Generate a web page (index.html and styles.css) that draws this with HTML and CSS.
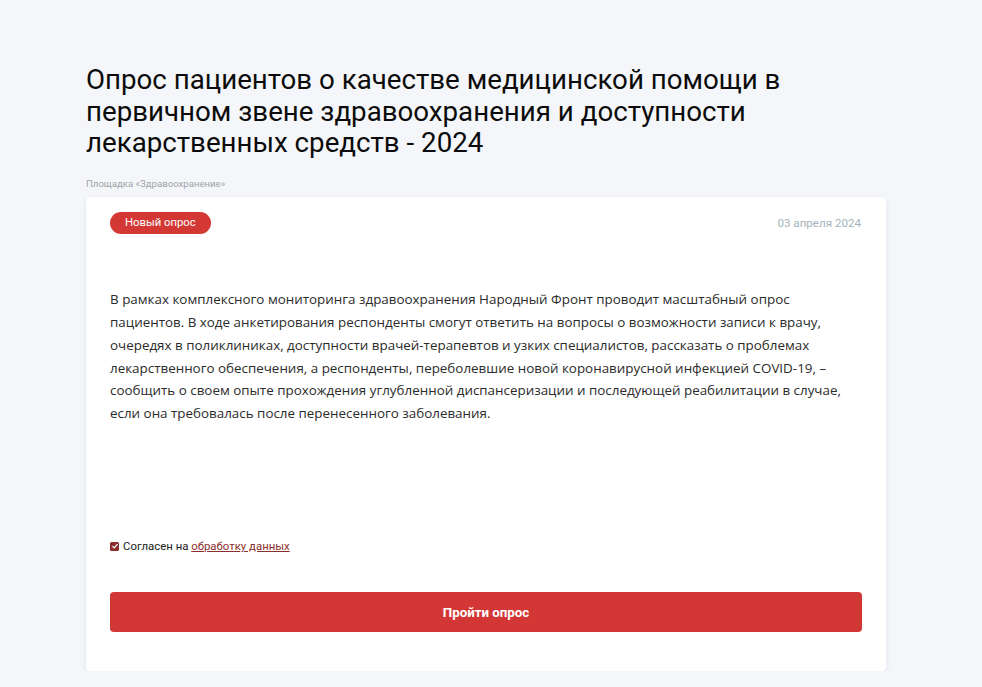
FILE: index.html
```html
<!DOCTYPE html>
<html lang="ru">
<head>
<meta charset="utf-8">
<link rel="stylesheet" href="styles.css">
</head>
<body>
<main class="page">
  <h1 class="title">Опрос пациентов о качестве медицинской помощи в первичном звене здравоохранения и доступности лекарственных средств - 2024</h1>
  <div class="platform">Площадка «Здравоохранение»</div>
  <section class="card">
    <div class="card-head">
      <span class="badge">Новый опрос</span>
      <span class="date">03 апреля 2024</span>
    </div>
    <p class="desc">В рамках комплексного мониторинга здравоохранения Народный Фронт проводит масштабный опрос пациентов. В ходе анкетирования респонденты смогут ответить на вопросы о возможности записи к врачу, очередях в поликлиниках, доступности врачей-терапевтов и узких специалистов, рассказать о проблемах лекарственного обеспечения, а респонденты, переболевшие новой коронавирусной инфекцией COVID-19, – сообщить о своем опыте прохождения углубленной диспансеризации и последующей реабилитации в случае, если она требовалась после перенесенного заболевания.</p>
    <label class="agree">
      <span class="check"><svg viewBox="0 0 10 10" width="8" height="8"><path d="M1.8 5.2 L4 7.3 L8.2 2.6" fill="none" stroke="#fff" stroke-width="1.6"/></svg></span>
      <span>Согласен на <a href="#" class="link">обработку данных</a></span>
    </label>
    <button class="btn">Пройти опрос</button>
  </section>
</main>
</body>
</html>
```
FILE: styles.css
```css
html, body {
  margin: 0;
  padding: 0;
  background: #f4f6f9;
}
body {
  font-family: "Open Sans", "Noto Sans", sans-serif;
  color: #222;
}
.page {
  width: 800px;
  padding: 64px 0 0 0;
  box-sizing: border-box;
  margin-left: 86px;
}
.title {
  font-family: Roboto, "Noto Sans", sans-serif;
  font-weight: 400;
  font-size: 27.7px;
  line-height: 31.7px;
  margin: 0;
  color: #0b0b0b;
  width: 720px;
}
.platform {
  font-family: Roboto, sans-serif;
  font-size: 9.6px;
  color: #9ea3a8;
  margin-top: 19px;
  line-height: 12px;
}
.card {
  margin-top: 7px;
  background: #fff;
  border-radius: 4px;
  box-shadow: 0 2px 4px rgba(160, 180, 200, 0.3);
  padding: 15px 24px 39px 24px;
  height: 474px;
  box-sizing: border-box;
  display: flex;
  flex-direction: column;
}
.card-head {
  display: flex;
  justify-content: space-between;
  align-items: center;
  height: 22px;
}
.badge {
  background: #d43834;
  color: #fff;
  font-family: Roboto, sans-serif;
  font-size: 11.3px;
  border-radius: 11px;
  height: 22px;
  line-height: 22px;
  padding: 0 15px;
}
.date {
  font-family: Roboto, sans-serif;
  font-size: 11.6px;
  color: #a4b3bb;
  margin-right: 1px;
}
.desc {
  margin: 54px 0 0 0;
  font-size: 13.4px;
  line-height: 22.8px;
  color: #2b2b2b;
}
.agree {
  margin-top: auto;
  display: flex;
  align-items: center;
  gap: 4px;
  font-family: Roboto, sans-serif;
  font-size: 11.4px;
  color: #222;
}
.check {
  width: 9px;
  height: 9px;
  background: #8b2f2c;
  border-radius: 1.5px;
  display: inline-flex;
  align-items: center;
  justify-content: center;
}
.link {
  color: #8b2f2c;
  text-decoration: underline;
}
.btn {
  margin-top: 39px;
  height: 40px;
  width: 100%;
  border: none;
  border-radius: 4px;
  background: #d33735;
  color: #fff;
  font-family: Roboto, sans-serif;
  font-weight: 700;
  font-size: 13.3px;
  cursor: pointer;
}
```
